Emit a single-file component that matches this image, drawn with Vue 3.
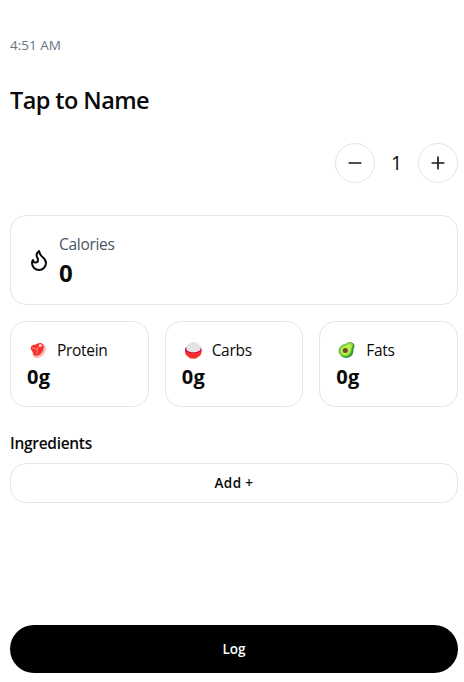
<script setup>
import { ref } from 'vue'

const quantity = ref(1)
const macros = [
  { id: 'protein', label: 'Protein', grams: 0 },
  { id: 'carbs', label: 'Carbs', grams: 0 },
  { id: 'fats', label: 'Fats', grams: 0 },
]
</script>

<template>
  <main class="page">
    <div class="time">4:51 AM</div>
    <h1 class="title">Tap to Name</h1>

    <div class="stepper">
      <button class="round" aria-label="Decrease" @click="quantity = Math.max(1, quantity - 1)">
        <svg class="sign" viewBox="0 0 24 24"><path d="M5 12h14" /></svg>
      </button>
      <span class="quantity">{{ quantity }}</span>
      <button class="round" aria-label="Increase" @click="quantity++">
        <svg class="sign" viewBox="0 0 24 24"><path d="M5 12h14M12 5v14" /></svg>
      </button>
    </div>

    <section class="card calories">
      <svg class="flame" viewBox="0 0 24 24">
        <path d="M8.5 14.5A2.5 2.5 0 0 0 11 12c0-1.38-.5-2-1-3-1.072-2.143-.224-4.054 2-6 .5 2.5 2 4.9 4 6.5 2 1.6 3 3.5 3 5.5a7 7 0 1 1-14 0c0-1.153.433-2.294 1-3a2.5 2.5 0 0 0 2.5 2.5z" />
      </svg>
      <div>
        <div class="calories-label">Calories</div>
        <div class="calories-value">0</div>
      </div>
    </section>

    <section class="macros">
      <div v-for="macro in macros" :key="macro.id" class="card macro">
        <div class="macro-head">
          <svg v-if="macro.id === 'protein'" class="food" viewBox="0 0 22 22">
            <path d="M5.500 14.500L15 5c2.300.3 3.800 2.100 3.700 4.800-.2 4.800-4.400 9.200-8.700 9.200-2.600 0-4.500-1.600-4.500-4.500z" fill="#ffb5aa" />
            <path d="M3.700 9.300c0-2.300 1.800-3.200 3.800-3.500C9.500 5.500 10.500 4 13 4c2.300 0 3.800 1.700 3.700 4-.2 4.600-3.700 8.700-7.500 8.700-2.200 0-3.200-1.400-3.400-3.200-.2-1.500-2.100-2.200-2.100-4.200z" fill="#f8312f" />
            <path d="M4.700 8.700c1.500 0 3.300 1.400 5.300 1.500l3-3.700M10 10.200c.7 1.300.5 2.800-.8 4.600" fill="none" stroke="#ff9c92" stroke-width=".9" />
            <circle cx="13.300" cy="6.500" r="1.500" fill="#ffd0ca" />
          </svg>
          <svg v-else-if="macro.id === 'carbs'" class="food" viewBox="0 0 22 22">
            <path d="M3 10.500h16.600v2.200c0 2.600-1.600 4.400-3.800 5.200l-.8 1.300c-1.800.6-5.600.6-7.400 0l-.8-1.300C4.600 17.100 3 15.300 3 12.700z" fill="#f8312f" />
            <path d="M3 10.500c0-1.500 1.200-2.700 2.700-2.700H17c1.500 0 2.600 1.200 2.600 2.700 0 2-3.100 3.700-8.300 3.700S3 12.500 3 10.500z" fill="#ca0b4a" />
            <path d="M4.300 9.500C4.300 5.700 7.300 3 11.500 3s7.200 2.700 7.200 6.500c0 2.200-3.200 3.700-7.200 3.700s-7.200-1.500-7.200-3.700z" fill="#e8e8e8" />
            <path d="M7.500 6l1 1M11 4.700l1 .5M14.500 6l-1 1M6.500 9.500l1 .5M10 8.500l1-.5M13 10l1 .5M16 8.500l1 1M9.500 11.500h1M15 11.500h.5" stroke="#b4b4b4" stroke-width=".8" />
          </svg>
          <svg v-else class="food" viewBox="0 0 22 22">
            <g transform="translate(0 .4)">
              <path d="M15.800 3.300c2 .2 3 2 2.600 4.200-.3 1.400-1 2.300-1 3.900 0 4.400-3 7.100-7 7.100-2 0-4-.7-5.400-2.500z" fill="#2f943b" />
              <path d="M3 11.500c0-3.300 2.300-5.600 5.500-6.300 2.200-.5 3.300-2.200 5.600-2.200 2 0 3.300 1.500 3 3.500-.3 1.500-1 2.400-1.200 4.200-.4 4-3 6.600-6.700 6.600-3.600 0-6.200-2.400-6.200-5.800z" fill="#86d72f" stroke="#44a33b" stroke-width=".7" />
              <path d="M4.800 11.300c0-2.500 1.900-4.300 4.500-4.900 1.900-.5 3-1.900 4.700-1.900 1.200 0 1.800.9 1.600 2-.3 1.300-1 2.400-1.200 4-.4 3-2.200 5-4.900 5-2.800 0-4.700-1.800-4.700-4.200z" fill="#b8ed4b" />
              <circle cx="9.300" cy="11" r="2.500" fill="#6d4534" />
            </g>
          </svg>
          <span class="macro-label">{{ macro.label }}</span>
        </div>
        <div class="macro-value">{{ macro.grams }}g</div>
      </div>
    </section>

    <h2 class="subtitle">Ingredients</h2>
    <button class="add">Add +</button>
    <button class="log">Log</button>
  </main>
</template>

<style>
body {
  background: #fff;
}
</style>

<style scoped>
.page {
  box-sizing: border-box;
  height: 682px;
  padding: 35px 6px 9px 10px;
  display: flex;
  flex-direction: column;
  font-family: "Segoe UI", "Open Sans", "Noto Sans", sans-serif;
  font-size: 16px;
  line-height: 24px;
  color: #0a0a0a;
}

h1,
h2 {
  margin: 0;
}

button {
  box-sizing: border-box;
  padding: 0;
  font: inherit;
  color: inherit;
}

.time {
  font-size: 13.5px;
  line-height: 20px;
  color: #6b7280;
}

.title {
  margin-top: 29px;
  font-size: 23.5px;
  line-height: 32px;
  font-weight: 600;
  letter-spacing: -0.58px;
}

.stepper {
  margin-top: 27px;
  display: flex;
  justify-content: flex-end;
  align-items: center;
}

.round {
  width: 40px;
  height: 40px;
  display: flex;
  align-items: center;
  justify-content: center;
  border: 1px solid #e5e5e5;
  border-radius: 50%;
  background: #fff;
}

.sign {
  width: 20px;
  height: 20px;
  fill: none;
  stroke: #171717;
  stroke-width: 2;
  stroke-linecap: round;
}

.quantity {
  width: 43px;
  text-align: center;
  font-size: 19.5px;
  line-height: 28px;
}

.card {
  box-sizing: border-box;
  border: 1px solid #e5e5e5;
  border-radius: 16px;
  padding: 16px;
  background: #fff;
}

.calories {
  margin-top: 32px;
  height: 90px;
  display: flex;
  align-items: center;
  gap: 8px;
}

.flame {
  width: 24px;
  height: 24px;
  fill: none;
  stroke: #0a0a0a;
  stroke-width: 2;
  stroke-linecap: round;
  stroke-linejoin: round;
}

.calories-label {
  font-size: 15.5px;
  letter-spacing: -0.3px;
  color: #4b5563;
}

.calories-value {
  font-size: 24px;
  line-height: 34px;
  margin-bottom: -2px;
  font-weight: 700;
}

.macros {
  margin-top: 16px;
  display: grid;
  grid-template-columns: repeat(3, 1fr);
  gap: 16px;
}

.macro {
  height: 86px;
}

.macro-head {
  display: flex;
  align-items: center;
  gap: 8px;
}

.food {
  width: 22px;
  height: 22px;
}

.macro-label {
  font-size: 15.5px;
  letter-spacing: -0.3px;
}

.macro-value {
  font-size: 20px;
  line-height: 30px;
  font-weight: 700;
  letter-spacing: 0.3px;
}

.subtitle {
  margin-top: 24px;
  font-size: 15.5px;
  line-height: 24px;
  font-weight: 600;
  letter-spacing: -0.3px;
}

.add {
  margin-top: 8px;
  height: 40px;
  border: 1px solid #e5e5e5;
  border-radius: 16px;
  background: #fff;
  font-size: 13.5px;
  font-weight: 600;
  letter-spacing: 0.4px;
}

.log {
  margin-top: auto;
  height: 48px;
  border: 0;
  border-radius: 24px;
  background: #000;
  color: #fff;
  font-size: 13.5px;
  font-weight: 600;
}
</style>
